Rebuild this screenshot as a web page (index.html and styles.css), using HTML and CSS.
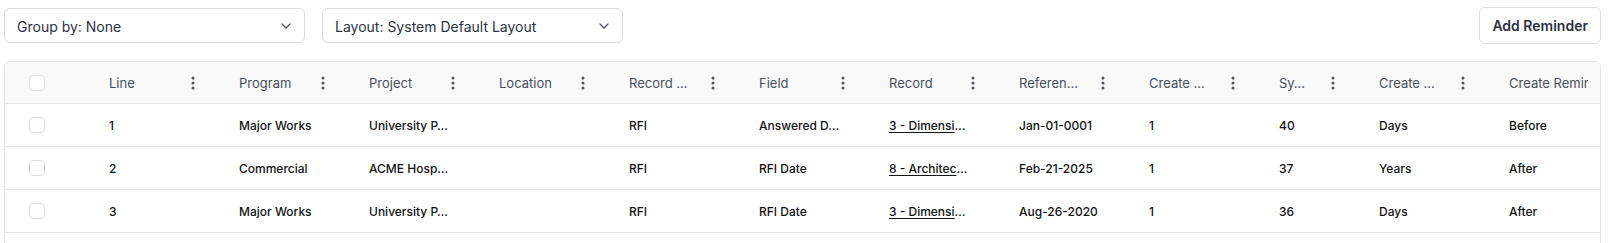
FILE: index.html
```html
<!DOCTYPE html>
<html lang="en">
<head>
<meta charset="UTF-8">
<meta name="viewport" content="width=device-width, initial-scale=1.0">
<title>Reminders</title>
<link rel="stylesheet" href="styles.css">
</head>
<body>
    <div class="page">
        <!-- Toolbar -->
        <div class="toolbar">
            <div class="select">
                <span>Group by: None</span>
                <svg class="chevron" width="10" height="6" viewBox="0 0 10 6"><path d="M1 1l4 4 4-4" fill="none" stroke="#4b5260" stroke-width="1.3" stroke-linecap="round" stroke-linejoin="round"/></svg>
            </div>
            <div class="select">
                <span>Layout: System Default Layout</span>
                <svg class="chevron" width="10" height="6" viewBox="0 0 10 6"><path d="M1 1l4 4 4-4" fill="none" stroke="#4b5260" stroke-width="1.3" stroke-linecap="round" stroke-linejoin="round"/></svg>
            </div>
            <button class="add-btn">Add Reminder</button>
        </div>

        <!-- Reminders grid -->
        <div class="grid-wrap">
            <table class="grid">
                <colgroup>
                    <col style="width: 88px">
                    <col style="width: 130px">
                    <col style="width: 130px">
                    <col style="width: 130px">
                    <col style="width: 130px">
                    <col style="width: 130px">
                    <col style="width: 130px">
                    <col style="width: 130px">
                    <col style="width: 130px">
                    <col style="width: 130px">
                    <col style="width: 100px">
                    <col style="width: 130px">
                    <col style="width: 130px">
                    <col style="width: 130px">
                </colgroup>
                <thead>
                    <tr>
                        <th class="check-cell"><input type="checkbox" class="check"></th>
                        <th><div class="th-inner"><span>Line</span><svg class="kebab" width="12" height="16" viewBox="0 0 12 16"><circle cx="6" cy="3" r="1.5"/><circle cx="6" cy="8" r="1.5"/><circle cx="6" cy="13" r="1.5"/></svg></div></th>
                        <th><div class="th-inner"><span>Program</span><svg class="kebab" width="12" height="16" viewBox="0 0 12 16"><circle cx="6" cy="3" r="1.5"/><circle cx="6" cy="8" r="1.5"/><circle cx="6" cy="13" r="1.5"/></svg></div></th>
                        <th><div class="th-inner"><span>Project</span><svg class="kebab" width="12" height="16" viewBox="0 0 12 16"><circle cx="6" cy="3" r="1.5"/><circle cx="6" cy="8" r="1.5"/><circle cx="6" cy="13" r="1.5"/></svg></div></th>
                        <th><div class="th-inner"><span>Location</span><svg class="kebab" width="12" height="16" viewBox="0 0 12 16"><circle cx="6" cy="3" r="1.5"/><circle cx="6" cy="8" r="1.5"/><circle cx="6" cy="13" r="1.5"/></svg></div></th>
                        <th><div class="th-inner"><span title="Record Type">Record …</span><svg class="kebab" width="12" height="16" viewBox="0 0 12 16"><circle cx="6" cy="3" r="1.5"/><circle cx="6" cy="8" r="1.5"/><circle cx="6" cy="13" r="1.5"/></svg></div></th>
                        <th><div class="th-inner"><span>Field</span><svg class="kebab" width="12" height="16" viewBox="0 0 12 16"><circle cx="6" cy="3" r="1.5"/><circle cx="6" cy="8" r="1.5"/><circle cx="6" cy="13" r="1.5"/></svg></div></th>
                        <th><div class="th-inner"><span>Record</span><svg class="kebab" width="12" height="16" viewBox="0 0 12 16"><circle cx="6" cy="3" r="1.5"/><circle cx="6" cy="8" r="1.5"/><circle cx="6" cy="13" r="1.5"/></svg></div></th>
                        <th><div class="th-inner"><span title="Reference Date">Referen…</span><svg class="kebab" width="12" height="16" viewBox="0 0 12 16"><circle cx="6" cy="3" r="1.5"/><circle cx="6" cy="8" r="1.5"/><circle cx="6" cy="13" r="1.5"/></svg></div></th>
                        <th><div class="th-inner"><span title="Create Reminder Count">Create …</span><svg class="kebab" width="12" height="16" viewBox="0 0 12 16"><circle cx="6" cy="3" r="1.5"/><circle cx="6" cy="8" r="1.5"/><circle cx="6" cy="13" r="1.5"/></svg></div></th>
                        <th><div class="th-inner"><span title="System Value">Sy…</span><svg class="kebab" width="12" height="16" viewBox="0 0 12 16"><circle cx="6" cy="3" r="1.5"/><circle cx="6" cy="8" r="1.5"/><circle cx="6" cy="13" r="1.5"/></svg></div></th>
                        <th><div class="th-inner"><span title="Create Reminder Unit">Create …</span><svg class="kebab" width="12" height="16" viewBox="0 0 12 16"><circle cx="6" cy="3" r="1.5"/><circle cx="6" cy="8" r="1.5"/><circle cx="6" cy="13" r="1.5"/></svg></div></th>
                        <th><div class="th-inner"><span class="clip">Create Reminder</span></div></th>
                        <th></th>
                    </tr>
                </thead>
                <tbody>
                    <tr>
                        <td class="check-cell"><input type="checkbox" class="check"></td>
                        <td>1</td>
                        <td>Major Works</td>
                        <td>University P…</td>
                        <td></td>
                        <td>RFI</td>
                        <td>Answered D…</td>
                        <td><a href="#" class="rec-link">3 - Dimensi</a>…</td>
                        <td>Jan-01-0001</td>
                        <td>1</td>
                        <td>40</td>
                        <td>Days</td>
                        <td>Before</td>
                        <td></td>
                    </tr>
                    <tr>
                        <td class="check-cell"><input type="checkbox" class="check"></td>
                        <td>2</td>
                        <td>Commercial</td>
                        <td>ACME Hosp…</td>
                        <td></td>
                        <td>RFI</td>
                        <td>RFI Date</td>
                        <td><a href="#" class="rec-link">8 - Architec</a>…</td>
                        <td>Feb-21-2025</td>
                        <td>1</td>
                        <td>37</td>
                        <td>Years</td>
                        <td>After</td>
                        <td></td>
                    </tr>
                    <tr>
                        <td class="check-cell"><input type="checkbox" class="check"></td>
                        <td>3</td>
                        <td>Major Works</td>
                        <td>University P…</td>
                        <td></td>
                        <td>RFI</td>
                        <td>RFI Date</td>
                        <td><a href="#" class="rec-link">3 - Dimensi</a>…</td>
                        <td>Aug-26-2020</td>
                        <td>1</td>
                        <td>36</td>
                        <td>Days</td>
                        <td>After</td>
                        <td></td>
                    </tr>
                    <tr class="filler">
                        <td></td><td></td><td></td><td></td><td></td><td></td><td></td>
                        <td></td><td></td><td></td><td></td><td></td><td></td><td></td>
                    </tr>
                </tbody>
            </table>
        </div>
    </div>
</body>
</html>
```

FILE: styles.css
```css
/* Basic page styling */
html, body {
    margin: 0;
    height: 100%;
    overflow: hidden;
    background: #fff;
    font-family: 'Inter', 'Noto Sans', sans-serif;
    color: #111;
}

.page {
    padding: 7px 8px 0 4px;
}

/* Toolbar with dropdowns and button */
.toolbar {
    display: flex;
    align-items: center;
    gap: 17px;
}

.select {
    width: 301px;
    height: 35px;
    box-sizing: border-box;
    border: 1px solid #d9dbe0;
    border-radius: 6px;
    display: flex;
    align-items: center;
    justify-content: space-between;
    padding: 1px 13px 0 12px;
    font-size: 14px;
    color: #2b3240;
}

.add-btn {
    margin-left: auto;
    height: 37px;
    padding: 0 12px;
    border: 1px solid #dedfe3;
    border-radius: 6px;
    background: #fff;
    font-family: inherit;
    font-size: 14px;
    font-weight: 600;
    color: #2b3240;
}

/* Grid */
.grid-wrap {
    margin-top: 17px;
    border: 1px solid #e4e4e4;
    border-radius: 6px;
    overflow: hidden;
}

.grid {
    table-layout: fixed;
    border-collapse: collapse;
    width: max-content;
}

.grid th {
    height: 41px;
    padding: 0;
    background: #f9f9f9;
    border-bottom: 1px solid #e4e4e4;
    text-align: left;
    font-size: 13px;
    font-weight: 400;
    color: #48505d;
}

.th-inner {
    display: flex;
    align-items: center;
    justify-content: space-between;
    padding: 0 24px 0 16px;
    white-space: nowrap;
}

.kebab {
    fill: #4f5560;
    flex-shrink: 0;
}

.clip {
    display: block;
    width: 79px;
    overflow: hidden;
}

.grid td {
    height: 42px;
    padding: 0 16px;
    border-bottom: 1px solid #e4e4e4;
    font-size: 12px;
    font-weight: 450;
    color: #121212;
    white-space: nowrap;
}

.grid .check-cell {
    padding: 0 0 0 24px;
}

.check {
    appearance: none;
    display: block;
    width: 16px;
    height: 16px;
    margin: 0;
    border: 1px solid #dcdde0;
    border-radius: 4px;
    background: #fff;
}

.rec-link {
    color: #121212;
    text-decoration: underline;
    text-underline-offset: 2px;
}
```
